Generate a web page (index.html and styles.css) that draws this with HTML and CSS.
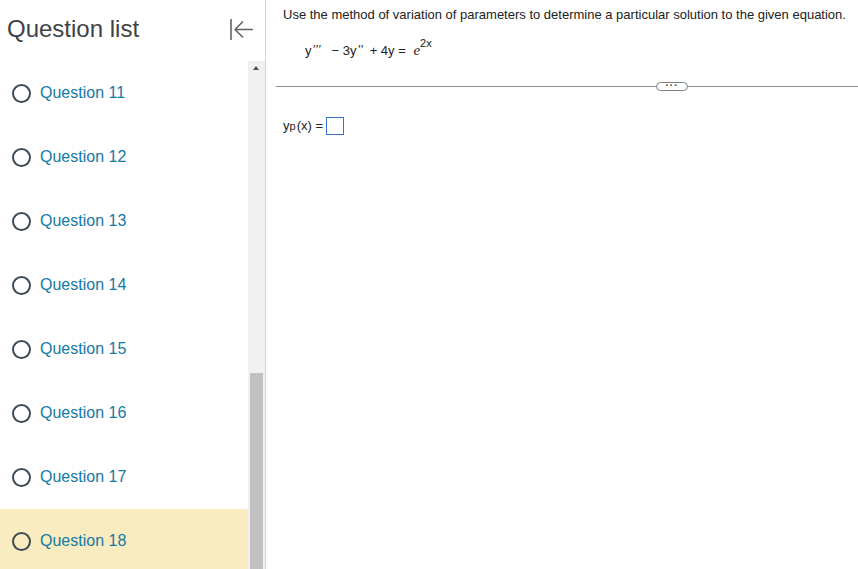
FILE: index.html
```html
<!doctype html>
<html lang="en">
<head>
	<meta charset="UTF-8" />
	<title>Question</title>
	<link rel="stylesheet" href="styles.css">
</head>
<body>
	<div class="page">
		<aside class="sidebar">
			<header class="side-head">
				<h1>Question list</h1>
				<svg class="collapse" width="26" height="24" viewBox="0 0 26 24">
					<path d="M2 2V23M6 12.5H24M6 12.5L14 4.5M6 12.5L14 20.5" fill="none" stroke="#5f6368" stroke-width="1.6"/>
				</svg>
			</header>
			<div class="side-body">
				<ul class="qlist">
					<li><span class="ring"></span>Question 11</li>
					<li><span class="ring"></span>Question 12</li>
					<li><span class="ring"></span>Question 13</li>
					<li><span class="ring"></span>Question 14</li>
					<li><span class="ring"></span>Question 15</li>
					<li><span class="ring"></span>Question 16</li>
					<li><span class="ring"></span>Question 17</li>
					<li class="current"><span class="ring"></span>Question 18</li>
				</ul>
				<div class="scroll">
					<span class="arrow"></span>
					<span class="thumb"></span>
				</div>
			</div>
		</aside>
		<main class="content">
			<p class="prompt">Use the method of variation of parameters to determine a particular solution to the given equation.</p>
			<p class="eq">y<i class="pr">'''</i> &minus; 3y<i class="pr two">''</i> + 4y = <i class="e">e</i><sup>2x</sup></p>
			<div class="divider"><span class="more">&middot;&middot;&middot;</span></div>
			<p class="answer">y<sub>p</sub>(x) = <span class="box"></span></p>
		</main>
	</div>
</body>
</html>
```

FILE: styles.css
```css
* {
	margin: 0;
	padding: 0;
	box-sizing: border-box;
}

html,
body {
	height: 100%;
	overflow: hidden;
}

body {
	font-family: "Liberation Sans", Arial, sans-serif;
	background: #fff;
	color: #222;
}

.page {
	display: flex;
	height: 569px;
}

.sidebar {
	width: 266px;
	flex: none;
	border-right: 1px solid #d6d6d6;
	display: flex;
	flex-direction: column;
}

.side-head {
	height: 61px;
	display: flex;
	align-items: flex-start;
	justify-content: space-between;
	padding: 15px 10px 0 7px;
}

.side-head h1 {
	font-size: 24px;
	font-weight: normal;
	color: #3d4247;
	line-height: 28px;
}

.collapse {
	margin-top: 2px;
}

.side-body {
	flex: 1;
	display: flex;
	overflow: hidden;
}

.qlist {
	list-style: none;
	width: 248px;
}

.qlist li {
	height: 64px;
	display: flex;
	align-items: center;
	padding-left: 12px;
	font-size: 16px;
	color: #1479a3;
}

.qlist li.current {
	background: #f9ecc0;
}

.ring {
	width: 19px;
	height: 19px;
	border: 2px solid #3e4a56;
	border-radius: 50%;
	margin-right: 9px;
}

.scroll {
	width: 17px;
	background: #f0f0f0;
	position: relative;
}

.arrow {
	position: absolute;
	top: 5px;
	left: 5px;
	border-left: 3.5px solid transparent;
	border-right: 3.5px solid transparent;
	border-bottom: 4px solid #505050;
}

.thumb {
	position: absolute;
	top: 312px;
	left: 2px;
	width: 13px;
	bottom: 0;
	background: #c1c1c1;
}

.content {
	flex: 1;
	padding: 7px 0 0 17px;
	font-size: 13px;
}

.prompt {
	line-height: 16px;
}

.eq {
	margin-top: 12px;
	padding-left: 22px;
	line-height: 16px;
	font-size: 13px;
}

.eq .pr {
	font-size: 12px;
	letter-spacing: 0.5px;
	margin-right: 7px;
	margin-left: 1px;
	vertical-align: 1px;
}

.eq .pr.two {
	margin-right: 3px;
}

.eq .e {
	font-family: "Liberation Serif", "Times New Roman", serif;
	font-size: 15px;
	margin-left: 4px;
}

.eq sup {
	font-size: 11px;
	vertical-align: 8px;
	margin-left: 0;
}

.divider {
	margin: 27px 0 0 -7px;
	border-top: 1px solid #8a8d91;
	height: 1px;
	position: relative;
}

.more {
	position: absolute;
	left: 380px;
	top: -5px;
	width: 32px;
	height: 9px;
	border: 1px solid #7b7f84;
	border-radius: 5px;
	background: #fff;
	font-size: 10px;
	line-height: 5px;
	text-align: center;
	color: #444;
	letter-spacing: 1px;
	font-weight: bold;
}

.answer {
	margin-top: 30px;
	display: flex;
	align-items: center;
	font-size: 13px;
	line-height: 18px;
}

.answer sub {
	font-size: 11px;
	vertical-align: -3px;
	margin-right: 1px;
}

.box {
	display: inline-block;
	width: 18px;
	height: 18px;
	border: 1.5px solid #3b6fd4;
	margin-left: 3px;
}
```
